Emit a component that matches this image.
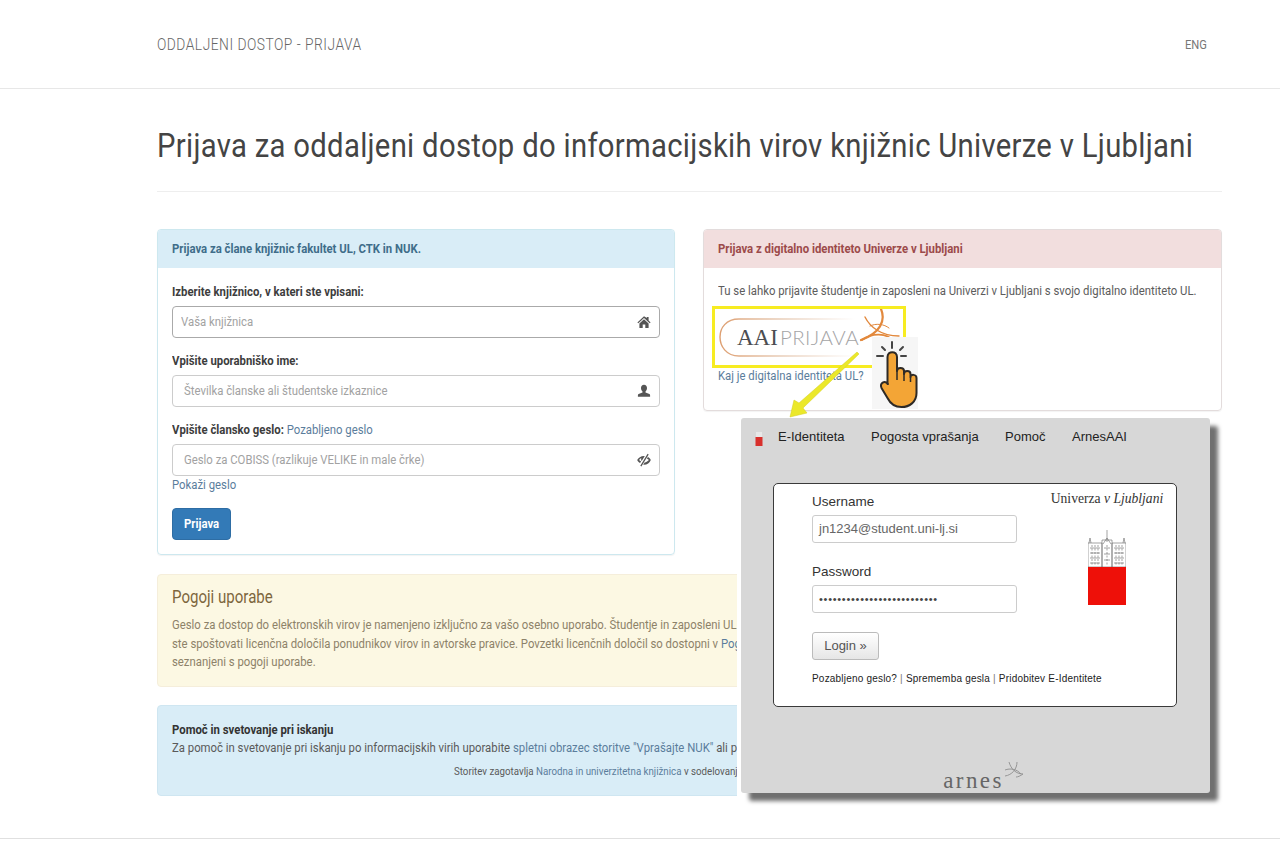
<div class="page">
  <header class="topbar">
    <span class="brand"><span class="c">ODDALJENI DOSTOP - PRIJAVA</span></span>
    <span class="lang"><span class="c">ENG</span></span>
  </header>

  <main class="wrap">
    <h1><span class="c">Prijava za oddaljeni dostop do informacijskih virov knjižnic Univerze v Ljubljani</span></h1>
    <div class="rule"></div>

    <div class="columns">
      <section class="panel info">
        <div class="panel-head"><span class="c">Prijava za člane knjižnic fakultet UL, CTK in NUK.</span></div>
        <div class="panel-body">
          <div class="label"><span class="c">Izberite knjižnico, v kateri ste vpisani:</span></div>
          <div class="input dark">
            <span class="ph first"><span class="c">Vaša knjižnica</span></span>
            <svg class="gi" viewBox="0 0 14 14"><path d="M7 1.200 0.400 7.400l.9.900L7 3l5.700 5.300.9-.9-2-1.900V2h-1.800v1.100L7 1.200zM2.400 8.600V13h3.300V9.600h2.600V13h3.300V8.600L7 4.300 2.400 8.600z" fill="#555"/></svg>
          </div>
          <div class="label"><span class="c">Vpišite uporabniško ime:</span></div>
          <div class="input">
            <span class="ph"><span class="c">Številka članske ali študentske izkaznice</span></span>
            <svg class="gi" viewBox="0 0 14 14"><path d="M7 .8c-1.900 0-3 1.400-3 3.300 0 1.400.6 2.700 1.500 3.400v1.100L1.600 10c-.5.3-.7.7-.7 1.200v1.600h12.200v-1.600c0-.5-.2-.9-.7-1.200L8.500 8.600V7.500c.9-.7 1.500-2 1.500-3.400C10 2.200 8.900.8 7 .8z" fill="#555"/></svg>
          </div>
          <div class="label"><span class="c">Vpišite člansko geslo: <a class="plain">Pozabljeno geslo</a></span></div>
          <div class="input last">
            <span class="ph"><span class="c">Geslo za COBISS (razlikuje VELIKE in male črke)</span></span>
            <svg class="gi" viewBox="0 0 14 14"><path d="M10.600.8 3.300 12.800l1.100.6L11.700 1.400l-1.100-.6zM7 3.100C3.900 3.100 1.300 5 .2 7c.6 1.200 1.600 2.300 2.900 3l1-1.700C3.300 7.900 2.600 7.500 2.100 7c.6-.8 1.400-1.500 2.300-1.900-.2.400-.3.800-.3 1.200 0 .7.200 1.300.6 1.800l3.100-5C7.500 3.100 7.200 3.100 7 3.100zM10.900 4l-1 1.700c.8.400 1.500.8 2 1.300-1 1.200-2.500 2.300-4.300 2.500l-1.400 2.300h.8c3.100 0 5.700-1.900 6.800-4.800-.6-1.200-1.600-2.300-2.900-3z" fill="#555"/></svg>
          </div>
          <div class="link-line"><a class="plain"><span class="c">Pokaži geslo</span></a></div>
          <div class="btn"><span class="c">Prijava</span></div>
        </div>
      </section>

      <section class="panel danger">
        <div class="panel-head"><span class="c">Prijava z digitalno identiteto Univerze v Ljubljani</span></div>
        <div class="panel-body">
          <p class="intro"><span class="c">Tu se lahko prijavite študentje in zaposleni na Univerzi v Ljubljani s svojo digitalno identiteto UL.</span></p>
          <div class="aai">
            <svg width="188" height="55" viewBox="0 0 188 55">
              <defs>
                <linearGradient id="ring" x1="0" x2="1" y1="0" y2="0">
                  <stop offset="0" stop-color="#dd9e70"/>
                  <stop offset=".45" stop-color="#e8cdb8"/>
                  <stop offset="1" stop-color="#fff"/>
                </linearGradient>
              </defs>
              <path d="M140 10H24C11 10 5 19 5 28s6 19 19 19h116" fill="none" stroke="url(#ring)" stroke-width="1.400"/>
              <text x="22" y="36" class="aai-a">AAI</text>
              <text x="65" y="36" class="aai-b">PRIJAVA</text>
              <g fill="none" stroke="#e2883c" stroke-linecap="round">
                <path d="M150 8c5 10 16 19 34 19" stroke-width="1.400"/>
                <path d="M166 0c5 12-1 24-20 31" stroke-width="2.200"/>
                <path d="M147 31c10-7 24-8 33 2" stroke-width="1.800"/>
                <path d="M155 17c6-3 14-2 19 2" stroke-width="1"/>
              </g>
            </svg>
          </div>
          <a class="plain q"><span class="c">Kaj je digitalna identiteta UL?</span></a>
        </div>
      </section>
    </div>

    <section class="alert warn">
      <h4><span class="c">Pogoji uporabe</span></h4>
      <p><span class="c">Geslo za dostop do elektronskih virov je namenjeno izključno za vašo osebno uporabo. Študentje in zaposleni UL</span></p>
      <p><span class="c">ste spoštovati licenčna določila ponudnikov virov in avtorske pravice. Povzetki licenčnih določil so dostopni v <a class="plain">Pogojih</a></span></p>
      <p><span class="c">seznanjeni s pogoji uporabe.</span></p>
    </section>

    <section class="alert help">
      <div class="help-title"><span class="c">Pomoč in svetovanje pri iskanju</span></div>
      <p><span class="c">Za pomoč in svetovanje pri iskanju po informacijskih virih uporabite <a class="plain">spletni obrazec storitve "Vprašajte NUK"</a> ali pokličite</span></p>
      <p class="credit"><span class="c">Storitev zagotavlja <a class="plain">Narodna in univerzitetna knjižnica</a> v sodelovanju</span></p>
    </section>
  </main>

  <div class="bottom"></div>

  <svg class="arrow" width="90" height="90" viewBox="0 0 90 90">
    <path d="M70 12 12 63l-5-3-4 17 17-4-4-5L72 14z" fill="#ebe82a" stroke="#d2cf20" stroke-width=".5"/>
  </svg>

  <div class="tap">
    <svg width="46" height="72" viewBox="2 0 46 72">
      <g stroke="#444" stroke-width="2" stroke-linecap="round">
        <path d="M22 5v6M12 10l3 3M33 10l-3 3M7 19h6M31 19h5"/>
      </g>
      <path d="M17.500 47V20c0-6.500 9.500-6.500 9.500 0v14c0-4 7-4 7 0v3c0-4 6.500-4 6.500 0v3c0-3 6-3 6 1v15c0 9-7 14-15 14-7 0-11-3-14-9l-6-10c-2-5 3-8 6.500-4z" fill="#f3a536" stroke="#2e2a26" stroke-width="2" stroke-linejoin="round"/>
      <path d="M27 34v9M34 37v7M40.500 40v5" stroke="#2e2a26" stroke-width="1.500" fill="none"/>
    </svg>
  </div>

  <aside class="shot">
    <div class="win">
      <nav class="nav">
        <svg class="pin" width="8" height="14" viewBox="0 0 8 14"><rect x="1" y="0" width="6" height="5" fill="#e8e8e8"/><rect x="0.500" y="5" width="7" height="9" fill="#d8302c"/></svg>
        <span class="n1">E-Identiteta</span>
        <span class="n2">Pogosta vprašanja</span>
        <span class="n3">Pomoč</span>
        <span class="n4">ArnesAAI</span>
      </nav>
      <div class="card">
        <div class="form">
          <div class="f-label">Username</div>
          <div class="f-input">jn1234@student.uni-lj.si</div>
          <div class="f-label second">Password</div>
          <div class="f-input dots">••••••••••••••••••••••••••</div>
          <div class="login">Login »</div>
          <div class="f-links">Pozabljeno geslo? <i>|</i> Sprememba gesla <i>|</i> Pridobitev E-Identitete</div>
        </div>
        <div class="uni">
          <div class="uni-name">Univerza <em>v Ljubljani</em></div>
          <svg class="crest" width="38" height="76" viewBox="0 0 38 76">
            <g fill="none" stroke="#666" stroke-width=".6">
              <path d="M19 0v12M1 13l1-5 1 5M35 13l1-5 1 5M15 14l4-6 4 6"/>
              <path d="M0 13h14v24H0zM24 13h14v24H24zM14 10h10v27H14z"/>
              <path d="M2 18h10M2 23h10M2 28h10M2 33h10M26 18h10M26 23h10M26 28h10M26 33h10M16 18h6M16 24h6M16 30h6"/>
              <path d="M4 15v20M7 15v20M10 15v20M28 15v20M31 15v20M34 15v20M19 15v20" stroke-dasharray="2 1.500"/>
            </g>
            <rect y="37" width="38" height="38" fill="#ee1009"/>
          </svg>
        </div>
      </div>
      <div class="arnes">
        <span>arnes</span>
        <svg width="20" height="20" viewBox="0 0 20 20" fill="none" stroke="#8f8f8f" stroke-width=".9"><path d="M5 1c2 7 7 12 14 12 -3 2-5 3-7 3M13 1C13 8 8 14 1 15M1 9c5-2 12-1 16 4"/></svg>
      </div>
    </div>
  </aside>
</div>

<style>
  :global(body) { margin: 0; background: #fff; }
  .page {
    position: relative;
    height: 841px;
    overflow: hidden;
    font-family: "Roboto", "Liberation Sans", sans-serif;
    color: #333;
    font-size: 13.200px;
  }
  .c { display: inline-block; transform: scaleX(.86); transform-origin: left center; white-space: nowrap; }
  a.plain { color: #5b7d9c; }

  .topbar { height: 88px; border-bottom: 1px solid #e7e7e7; display: flex; justify-content: space-between; align-items: center; padding: 0 72px 0 157px; font-size: 16px; color: #777; }
  .lang { font-size: 13px; width: 23px; }
  .brand { width: 205px; font-weight: 300; letter-spacing: .6px; color: #666; }

  .wrap { width: 1065px; margin-left: 157px; }
  h1 { margin: 0; padding-top: 36px; height: 40px; line-height: 40px; font-size: 34px; font-weight: 400; color: #444; white-space: nowrap; letter-spacing: .36px; }
  .rule { margin-top: 26px; border-top: 1px solid #eee; }

  .columns { display: grid; grid-template-columns: 518px 519px; column-gap: 28px; margin-top: 37px; align-items: start; }
  .panel { border: 1px solid; border-radius: 4px; box-shadow: 0 1px 1px rgba(0,0,0,.05); box-sizing: border-box; }
  .panel.info { border-color: #cde8ef; height: 326px; }
  .panel.danger { border-color: #e3dcdc; height: 182px; }
  .panel-head { height: 38px; line-height: 38px; padding-left: 13.500px; font-size: 13.200px; font-weight: 700; border-radius: 3px 3px 0 0; }
  .info .panel-head { background: #d9edf7; color: #3f6d8a; }
  .danger .panel-head { background: #f2dede; color: #9c4a4a; }
  .panel-body { padding: 0 14.500px 0 13.500px; }

  .label { font-weight: 700; height: 20px; line-height: 22px; margin-top: 13px; white-space: nowrap; color: #3d3d3d; }
  .label a { font-weight: 400; }
  .input { height: 32px; border: 1px solid #ccc; border-radius: 4px; margin-top: 5px; margin-bottom: 12px; display: flex; align-items: center; justify-content: space-between; padding: 0 8px 0 11px; box-sizing: border-box; }
  .input.dark { border-color: #aaa; }
  .input.last { margin-bottom: 0; }
  .input + .label { margin-top: 0; }
  .ph { color: #a2a2a2; white-space: nowrap; line-height: 28px; }
  .ph.first { margin-left: -3px; }
  .gi { width: 14px; height: 14px; flex: none; }
  .link-line { margin-top: -2px; height: 20px; line-height: 22px; }
  .btn { margin-top: 14px; width: 59px; height: 32px; line-height: 30px; background: #337ab7; border: 1px solid #2e6da4; border-radius: 4px; color: #fff; font-weight: 700; box-sizing: border-box; padding-left: 11px; }

  .intro { margin: 13px 0 0; height: 20px; line-height: 20px; color: #5c5c5c; white-space: nowrap; }
  .aai { width: 194px; height: 62px; box-sizing: border-box; border: 3.500px solid #f7ec21; margin: 5px 0 0 -5.500px; }
  .aai svg { display: block; }
  .aai-a { font-family: "Liberation Serif", serif; font-size: 23px; fill: #4c4d51; }
  .aai-b { font-family: "Lato", sans-serif; font-weight: 300; font-size: 20.500px; letter-spacing: .4px; fill: #a4a4a6; }
  .q { display: block; margin-top: 0; line-height: 16px; }

  .alert { margin-top: 19px; border: 1px solid; border-radius: 4px; box-sizing: border-box; padding: 0 13.500px; white-space: nowrap; overflow: hidden; }
  .warn { background: #fcf8e3; border-color: #f5eedb; height: 113px; }
  .warn h4 { margin: 0; padding-top: 11px; height: 22px; line-height: 22px; font-size: 17.500px; font-weight: 400; color: #7d663d; }
  .warn p { margin: 0; height: 18.500px; line-height: 18.500px; color: #8d8269; }
  .warn h4 + p { margin-top: 8px; }
  .help { background: #d9edf7; border-color: #cfe6f1; height: 91px; color: #5a5a5a; margin-top: 18px; padding-top: 15px; }
  .help-title { font-weight: 700; height: 17px; line-height: 17px; color: #333; font-size: 13.200px; }
  .help p { margin: 0; height: 20px; line-height: 20px; }
  .help .credit { font-size: 11.300px; padding-left: 282px; height: 28px; line-height: 28px; }

  .bottom { position: absolute; left: 0; right: 0; top: 838px; border-top: 1px solid #e0e0e0; }

  .arrow { position: absolute; left: 787px; top: 340px; z-index: 3; }
  .tap { position: absolute; left: 872px; top: 337px; width: 46px; height: 72px; background: #f6f6f6; z-index: 2; }
  .tap svg { display: block; }

  .shot { position: absolute; left: 737px; top: 414px; width: 490px; height: 392px; background: #fff; z-index: 1; font-family: "Liberation Sans", sans-serif; }
  .win { position: absolute; left: 4px; top: 4px; width: 469px; height: 375px; background: #d7d7d7; border-radius: 3px; box-shadow: 8px 8px 4px #707070; }
  .nav { display: flex; height: 37px; align-items: center; font-size: 13px; color: #222; padding-left: 14px; }
  .pin { margin-right: 15px; margin-top: 5px; }
  .n1 { width: 93px; } .n2 { width: 134px; } .n3 { width: 67px; }

  .card { margin: 28px 0 0 32px; width: 404px; height: 224px; box-sizing: border-box; background: #fff; border: 1px solid #3a3a3a; border-radius: 5px; display: flex; padding: 0 14px 0 38px; }
  .form { width: 237px; flex: none; }
  .f-label { font-size: 13.500px; color: #333; line-height: 16px; margin-top: 10px; }
  .f-label.second { margin-top: 21px; }
  .f-input { margin-top: 5px; width: 205px; height: 28px; box-sizing: border-box; border: 1px solid #ccc; border-radius: 3px; padding-left: 6px; line-height: 26px; font-size: 13px; color: #666; background: #fff; }
  .dots { font-size: 11px; color: #444; letter-spacing: .72px; }
  .login { margin-top: 19px; width: 67px; height: 28px; box-sizing: border-box; border: 1px solid #bbb; border-radius: 3px; background: linear-gradient(#fff, #e6e6e6); font-size: 13px; line-height: 26px; text-align: center; color: #555; }
  .f-links { margin-top: 13px; font-size: 10px; color: #222; white-space: nowrap; letter-spacing: .2px; line-height: 12px; }
  .f-links i { font-style: normal; color: #777; }
  .uni { width: 116px; flex: none; display: flex; flex-direction: column; align-items: center; }
  .uni-name { font-family: "Liberation Serif", serif; font-size: 13.600px; line-height: 14px; margin-top: 8px; color: #333; white-space: nowrap; }
  .crest { margin-top: 24px; display: block; }
  .arnes { margin-top: 62px; display: flex; justify-content: center; padding-left: 16px; color: #666; font-family: "Liberation Serif", serif; font-size: 23px; letter-spacing: 2.400px; height: 24px; line-height: 24px; }
  .arnes svg { margin: -8px 0 0 0; }
</style>
